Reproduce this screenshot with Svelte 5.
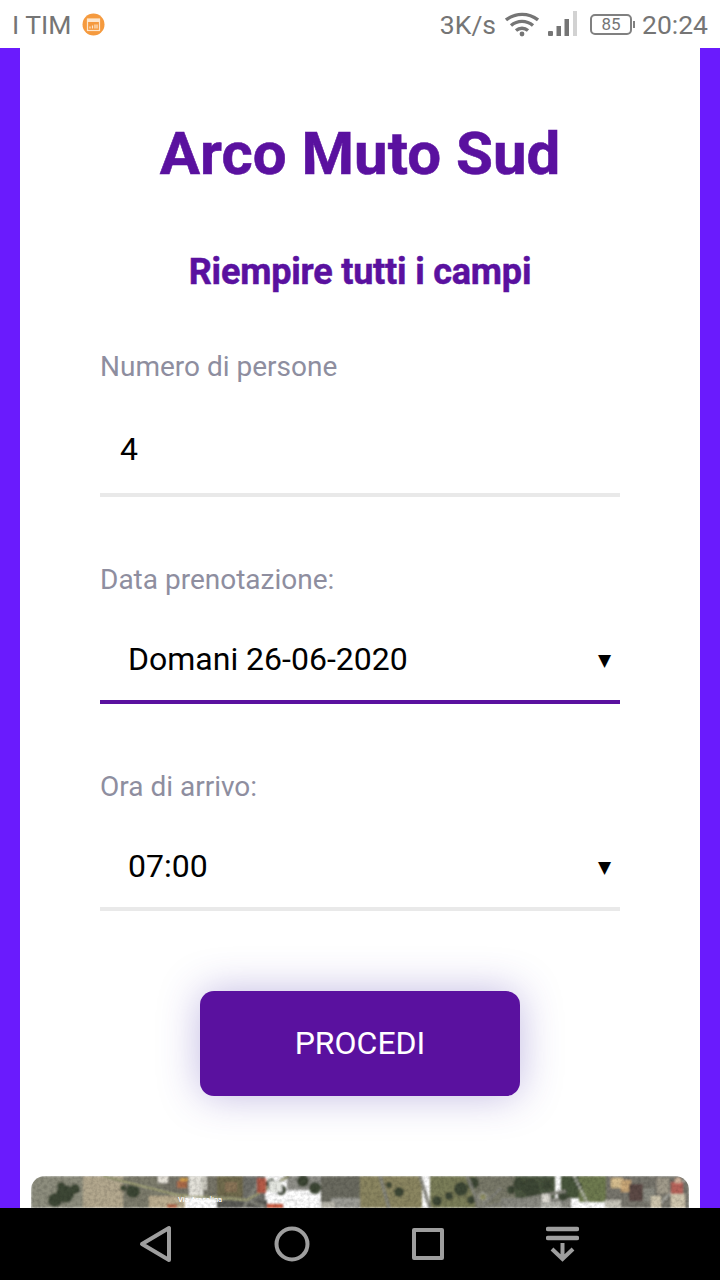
<script>
  let persone = $state('4');
  let data = $state('Domani 26-06-2020');
  let ora = $state('07:00');

  const giorni = ['Domani 26-06-2020', 'Sabato 27-06-2020'];
  const orari = ['07:00', '08:00', '09:00'];

  // blocchi della foto satellitare: x, y, larghezza, altezza, colore
  const patches = [
    [0, 0, 52, 32, '#8d8d7d'], [52, 0, 40, 32, '#b3a88e'], [92, 0, 40, 32, '#7d7c6c'], [118, 20, 36, 12, '#bcae90'],
    [132, 0, 54, 20, '#777568'], [186, 0, 26, 22, '#6f6a4e'], [194, 6, 12, 10, '#8a7558'], [212, 0, 22, 32, '#70706a'],
    [186, 24, 50, 8, '#5a5a54'], [256, 0, 44, 14, '#8f8f88'], [290, 0, 40, 32, '#6a6a5e'], [300, 22, 30, 10, '#9b9b94'],
    [329, 0, 62, 32, '#8a8560'], [399, 0, 45, 32, '#7a7d58'], [444, 0, 40, 32, '#787868'], [484, 0, 40, 32, '#4c5640'],
    [470, 22, 70, 10, '#8a8a82'], [530, 0, 20, 22, '#47553a'], [548, 0, 32, 26, '#6e7a50'], [575, 0, 83, 32, '#77756c']
  ];
  const trees = [
    [34, 18, 9], [24, 24, 7], [44, 13, 5], [30, 10, 4], [102, 15, 7], [92, 12, 3], [240, 8, 5], [250, 14, 5], [272, 5, 6], [284, 12, 6],
    [368, 16, 5], [358, 9, 3], [406, 25, 5], [418, 20, 4], [430, 13, 7], [442, 7, 6], [440, 24, 4], [488, 8, 6],
    [500, 12, 9], [480, 14, 4], [516, 9, 5], [532, 20, 5], [548, 10, 3]
  ];
  const roofs = [
    [127, 0, 10, 7, '#e6e2d8'], [149, 2, 8, 3, '#d8a548'], [146, 5, 10, 7, '#aa6a4a'], [158, 0, 14, 20, '#e4e2da'],
    [170, 0, 6, 14, '#c9c7bd'], [226, 2, 9, 15, '#b45a46'], [238, 5, 13, 11, '#e4e6e0'], [236, 28, 16, 4, '#c9583c'],
    [136, 28, 10, 4, '#b0684a'], [290, 26, 14, 6, '#b9b7ac'], [511, 18, 8, 10, '#dddad2'], [510, 26, 20, 6, '#b6b6ae'],
    [580, 2, 12, 10, '#d8bf90'], [590, 4, 10, 12, '#caa878'], [598, 8, 14, 17, '#5c4a44'], [574, 24, 16, 8, '#c4c2b6'],
    [612, 12, 12, 14, '#8a8a80'], [626, 2, 12, 16, '#a09a8a'], [640, 6, 12, 12, '#b6645a'], [644, 2, 6, 5, '#d8b8a0'],
    [620, 20, 10, 12, '#cdc4ac'], [640, 18, 14, 14, '#d0c6ae']
  ];
</script>

<div class="phone">
  <header class="status">
    <div class="left">
      <span>I TIM</span>
      <svg class="cal" width="23" height="23" viewBox="0 0 23 23">
        <circle cx="11.5" cy="11.5" r="11" fill="#f59a3e" />
        <rect x="5.5" y="6" width="12" height="11.5" fill="none" stroke="#fde6cc" stroke-width="1.2" />
        <rect x="5.5" y="6" width="12" height="3" fill="#fde6cc" />
        <path d="M8 15.5v-2M10.5 15.5v-3M13 15.5v-4M15 15.5v-4" stroke="#fde6cc" stroke-width="1.2" />
      </svg>
    </div>
    <div class="right">
      <span>3K/s</span>
      <svg class="wifi" width="34" height="26" viewBox="0 0 34 26" fill="none" stroke="#757575" stroke-width="3.4">
        <path d="M1 9C10.5 1.5 23.5 1.5 33 9" />
        <path d="M6 14.5C12.5 9 21.5 9 28 14.5" />
        <path d="M11 19.5C14.5 16.5 19.5 16.5 23 19.5" />
        <circle cx="17" cy="23" r="2.4" fill="#757575" stroke="none" />
      </svg>
      <svg class="signal" width="30" height="26" viewBox="0 0 30 26">
        <rect x="0" y="20" width="5" height="5" rx="1" fill="#757575" />
        <rect x="8.5" y="15" width="4.5" height="10" fill="#757575" />
        <rect x="16.5" y="8" width="4.5" height="17" fill="#757575" />
        <rect x="25" y="0" width="4" height="25" fill="#d2d2d2" />
      </svg>
      <div class="battery"><span>85</span></div>
      <span class="time">20:24</span>
    </div>
  </header>

  <main class="page">
    <div class="sheet">
      <h1>Arco Muto Sud</h1>
      <h2>Riempire tutti i campi</h2>

      <form class="form">
        <label class="field">
          <span class="label">Numero di persone</span>
          <input class="control" type="text" bind:value={persone} />
        </label>

        <label class="field">
          <span class="label">Data prenotazione:</span>
          <div class="select-wrap focused">
            <select class="control pick" bind:value={data}>
              {#each giorni as g}
                <option value={g}>{g}</option>
              {/each}
            </select>
            <span class="arrow">▼</span>
          </div>
        </label>

        <label class="field">
          <span class="label">Ora di arrivo:</span>
          <div class="select-wrap">
            <select class="control pick" bind:value={ora}>
              {#each orari as o}
                <option value={o}>{o}</option>
              {/each}
            </select>
            <span class="arrow">▼</span>
          </div>
        </label>

        <button class="submit" type="button">PROCEDI</button>
      </form>

      <div class="map">
        <svg width="658" height="32" viewBox="0 0 658 32">
          <defs>
            <filter id="grain" x="0" y="0" width="100%" height="100%">
              <feTurbulence type="fractalNoise" baseFrequency="0.3" numOctaves="2" seed="4" />
              <feColorMatrix values="0 0 0 0 0  0 0 0 0 0  0 0 0 0 0  1.4 0 0 0 -0.5" />
            </filter>
            <filter id="soft"><feGaussianBlur stdDeviation="0.8" /></filter>
          </defs>
          <g filter="url(#soft)">
            {#each patches as p}
              <rect x={p[0]} y={p[1]} width={p[2]} height={p[3]} fill={p[4]} />
            {/each}
            {#each trees as t}
              <circle cx={t[0]} cy={t[1]} r={t[2]} fill="#3d4734" />
            {/each}
            <g fill="none" stroke="#85857c" stroke-width="3">
              <path d="M72 0L146 19L216 24L258 0" />
              <path d="M216 24L236 32" />
              <path d="M232 0L212 32" />
              <path d="M349 0L358 32" />
              <path d="M389 0L399 32" />
              <path d="M436 0L449 32L535 15" />
              <path d="M449 32L470 12" />
            </g>
            <path d="M72 0L146 19L216 24L258 0" fill="none" stroke="#c8c86a" stroke-width="0.8" />
            <path d="M543 0L559 32" fill="none" stroke="#d8d8d0" stroke-width="2.5" stroke-dasharray="2 2" />
            <path d="M654 4L624 32" fill="none" stroke="#b0b0a8" stroke-width="2" />
            <circle cx="452" cy="21" r="4" fill="#8a8a60" stroke="#a8a8a0" stroke-width="1.5" />
            {#each roofs as r}
              <rect x={r[0]} y={r[1]} width={r[2]} height={r[3]} fill={r[4]} />
            {/each}
          </g>
          <rect width="658" height="32" filter="url(#grain)" opacity="0.22" />
          <text class="road" x="147" y="26">Via Arasalina</text>
        </svg>
      </div>
    </div>
  </main>

  <nav class="softkeys">
    <svg width="34" height="38" viewBox="0 0 34 38" fill="none" stroke="#9e9e9e" stroke-width="4" stroke-linejoin="round">
      <path d="M31 3V35L4 19Z" />
    </svg>
    <svg width="36" height="36" viewBox="0 0 36 36" fill="none" stroke="#9e9e9e" stroke-width="4">
      <circle cx="18" cy="18" r="15.5" />
    </svg>
    <svg width="32" height="32" viewBox="0 0 32 32" fill="none" stroke="#9e9e9e" stroke-width="4" stroke-linejoin="round">
      <rect x="2" y="2" width="28" height="28" />
    </svg>
    <svg width="33" height="36" viewBox="0 0 33 36" fill="none" stroke="#9e9e9e">
      <path d="M2 3H31M2 12H31" stroke-width="4.5" stroke-linecap="round" />
      <path d="M16.5 17V33M6 23L16.5 33L27 23" stroke-width="4" />
    </svg>
  </nav>
</div>

<style>
  :global(body) {
    margin: 0;
    font-family: Roboto, "Liberation Sans", sans-serif;
  }

  .phone {
    width: 720px;
    height: 1280px;
    display: flex;
    flex-direction: column;
    overflow: hidden;
  }

  .status {
    height: 48px;
    flex: none;
    background: #fff;
    color: #757575;
    font-size: 26.5px;
    display: flex;
    justify-content: space-between;
    align-items: center;
    padding: 0 12px;
  }

  .left, .right {
    display: flex;
    align-items: center;
  }

  .left { gap: 11px; }
  .right { gap: 9px; }

  .battery {
    width: 42px;
    height: 21px;
    box-sizing: border-box;
    border: 2px solid #808080;
    border-radius: 5px;
    font-size: 17px;
    display: flex;
    align-items: center;
    justify-content: center;
    position: relative;
    margin-left: 3px;
  }

  .battery::after {
    content: "";
    position: absolute;
    right: -5px;
    top: 5px;
    width: 2px;
    height: 7px;
    background: #808080;
  }

  .time { margin-left: 1px; }

  .page {
    flex: 1;
    min-height: 0;
    background: #6a1bfd;
    padding: 0 20px;
    overflow: hidden;
  }

  .sheet {
    background: #fff;
    height: 100%;
    display: flex;
    flex-direction: column;
    align-items: center;
  }

  h1 {
    margin: 67px 0 0;
    font-size: 60px;
    line-height: 78px;
    font-weight: 700;
    color: #5a119f;
    -webkit-text-stroke: 0.6px #5a119f;
  }

  h2 {
    margin: 57px 0 0;
    font-size: 36px;
    line-height: 44px;
    font-weight: 700;
    color: #5a119f;
    letter-spacing: -0.2px;
    -webkit-text-stroke: 0.5px #5a119f;
  }

  .form {
    width: 520px;
    margin-top: 55px;
    display: flex;
    flex-direction: column;
    align-items: center;
  }

  .field {
    width: 100%;
    display: block;
    margin-bottom: 65px;
  }

  .field:nth-child(3) { margin-bottom: 0; }

  .label {
    display: block;
    font-size: 28px;
    line-height: 36px;
    color: #8e8e9f;
  }

  .control {
    display: block;
    width: 100%;
    height: 90px;
    margin-top: 22px;
    box-sizing: border-box;
    border: none;
    border-bottom: 4px solid #e9e9e9;
    background: #fff;
    outline: none;
    border-radius: 0;
    font-family: inherit;
    font-size: 32px;
    color: #000;
    padding: 0 20px 2px;
  }

  .select-wrap {
    position: relative;
  }

  .pick {
    appearance: none;
    -webkit-appearance: none;
    padding: 0 28px;
    height: 86px;
    margin-top: 20px;
  }

  .focused .pick { border-bottom-color: #5a119f; }

  .arrow {
    position: absolute;
    right: 9px;
    top: 32px;
    font-size: 17px;
    line-height: 20px;
    color: #000;
    font-family: "DejaVu Sans", sans-serif;
    pointer-events: none;
  }

  .submit {
    width: 320px;
    height: 105px;
    flex: none;
    margin-top: 80px;
    padding: 0 0 2px;
    border: none;
    border-radius: 14px;
    background: #5a119f;
    color: #fff;
    font-family: inherit;
    font-size: 32px;
    box-shadow: 0 0 40px rgba(72, 50, 170, 0.34);
  }

  .map {
    width: 658px;
    height: 32px;
    flex: none;
    margin-top: 80px;
    border-radius: 14px 14px 0 0;
    overflow: hidden;
  }

  .map svg { display: block; }

  .road {
    font-family: Roboto, sans-serif;
    font-size: 7.5px;
    font-weight: 500;
    fill: #fff;
  }

  .softkeys {
    height: 72px;
    flex: none;
    background: #000;
    display: grid;
    grid-template-columns: 34px 36px 32px 33px;
    justify-content: start;
    align-items: center;
    column-gap: 102px;
    padding-left: 138px;
  }
</style>
